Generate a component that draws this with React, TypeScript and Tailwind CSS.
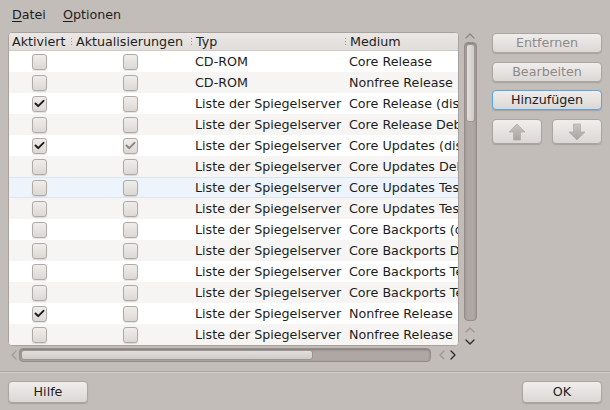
import React from "react";

const rows: { typ: string; medium: string; a: boolean; u: boolean }[] = [
  { typ: "CD-ROM", medium: "Core Release", a: false, u: false },
  { typ: "CD-ROM", medium: "Nonfree Release", a: false, u: false },
  { typ: "Liste der Spiegelserver", medium: "Core Release (distrib1)", a: true, u: false },
  { typ: "Liste der Spiegelserver", medium: "Core Release Debug (distrib2)", a: false, u: false },
  { typ: "Liste der Spiegelserver", medium: "Core Updates (distrib3)", a: true, u: true },
  { typ: "Liste der Spiegelserver", medium: "Core Updates Debug (distrib4)", a: false, u: false },
  { typ: "Liste der Spiegelserver", medium: "Core Updates Testing (distrib5)", a: false, u: false },
  { typ: "Liste der Spiegelserver", medium: "Core Updates Testing Debug", a: false, u: false },
  { typ: "Liste der Spiegelserver", medium: "Core Backports (distrib7)", a: false, u: false },
  { typ: "Liste der Spiegelserver", medium: "Core Backports Debug (distrib8)", a: false, u: false },
  { typ: "Liste der Spiegelserver", medium: "Core Backports Testing", a: false, u: false },
  { typ: "Liste der Spiegelserver", medium: "Core Backports Testing Debug", a: false, u: false },
  { typ: "Liste der Spiegelserver", medium: "Nonfree Release", a: true, u: false },
  { typ: "Liste der Spiegelserver", medium: "Nonfree Release", a: false, u: false },
];

function Check({ checked, grey }: { checked: boolean; grey?: boolean }) {
  return (
    <div className="w-[15px] h-[16px] rounded-[3px] border border-[#b0aaa7] bg-gradient-to-b from-[#efedeb] to-[#dcd8d5] shadow-[0_1px_1px_rgba(0,0,0,0.12)] flex items-center justify-center">
      {checked && (
        <svg width="11" height="9" viewBox="0 0 11 9">
          <path
            d="M1.5 4.5 L4.2 7.2 L9.5 1.8"
            fill="none"
            stroke={grey ? "#8a8583" : "#1a1a1a"}
            strokeWidth="1.9"
            strokeLinecap="round"
            strokeLinejoin="round"
          />
        </svg>
      )}
    </div>
  );
}

function Sep() {
  return (
    <div className="flex flex-col gap-[2px] mr-[4px]">
      <div className="w-[1px] h-[1px] bg-[#9a9491]" />
      <div className="w-[1px] h-[1px] bg-[#9a9491]" />
      <div className="w-[1px] h-[1px] bg-[#9a9491]" />
    </div>
  );
}

function Btn({ children, disabled, focus, w }: { children: React.ReactNode; disabled?: boolean; focus?: boolean; w?: string }) {
  return (
    <div
      className={
        "h-[20px] rounded-[4px] border flex items-center justify-center bg-gradient-to-b from-[#f0eeed] to-[#dbd7d5] shadow-[0_1px_1px_rgba(0,0,0,0.15)] " +
        (focus ? "border-[#58a7e3] text-[#1d1d1d] " : "border-[#aba5a2] ") +
        (disabled ? "text-[#8e8986] " : "text-[#1d1d1d] ")
      }
    >
      {children}
    </div>
  );
}

function Chevron({ dir, color = "#7d7774" }: { dir: "up" | "down" | "left" | "right"; color?: string }) {
  const d =
    dir === "up"
      ? "M1 6 L5 2 L9 6"
      : dir === "down"
      ? "M1 2 L5 6 L9 2"
      : dir === "left"
      ? "M6 1 L2 5 L6 9"
      : "M2 1 L6 5 L2 9";
  const vert = dir === "up" || dir === "down";
  return (
    <svg width={vert ? 10 : 8} height={vert ? 8 : 10} viewBox={vert ? "0 0 10 8" : "0 0 8 10"}>
      <path d={d} fill="none" stroke={color} strokeWidth="1.3" strokeLinecap="round" strokeLinejoin="round" />
    </svg>
  );
}

function Arrow({ up }: { up: boolean }) {
  return (
    <svg width="20" height="20" viewBox="0 0 20 20">
      <defs>
        <linearGradient id={up ? "gu" : "gd"} x1="0" y1="0" x2="0" y2="1">
          <stop offset="0" stopColor="#c9c5c3" />
          <stop offset="1" stopColor="#a9a4a1" />
        </linearGradient>
      </defs>
      <path
        d={up ? "M10 2 L18 10 L13.5 10 L13.5 18 L6.5 18 L6.5 10 L2 10 Z" : "M10 18 L18 10 L13.5 10 L13.5 2 L6.5 2 L6.5 10 L2 10 Z"}
        fill={`url(#${up ? "gu" : "gd"})`}
        stroke="#b3aeab"
        strokeWidth="0.8"
        strokeLinejoin="round"
      />
    </svg>
  );
}

export default function App() {
  return (
    <div
      className="w-[610px] h-[410px] bg-[#c3bdba] flex flex-col text-[12.7px] text-[#1d1d1d] overflow-hidden"
      style={{ fontFamily: '"DejaVu Sans", sans-serif' }}
    >
      {/* menu */}
      <div className="h-[32px] flex items-center pl-[12px] pb-[3px] gap-[17px]">
        <span>
          <span className="underline underline-offset-2">D</span>atei
        </span>
        <span>
          <span className="underline underline-offset-2">O</span>ptionen
        </span>
      </div>

      {/* content */}
      <div className="flex pl-[8px] pr-[8px]">
        <div className="w-[451px] flex flex-col">
          <div className="h-[314px] border border-[#a8a29f] rounded-[4px] bg-white overflow-hidden flex flex-col">
            <div className="h-[18px] shrink-0 flex items-center bg-gradient-to-b from-[#ebe8e6] to-[#e0dcda] border-b border-[#d0cbc8] whitespace-nowrap">
              <div className="w-[61px] pl-[3px]">Aktiviert</div>
              <div className="w-[120px] flex items-center pl-[1px]">
                <Sep />
                Aktualisierungen
              </div>
              <div className="w-[154px] flex items-center pl-[1px]">
                <Sep />
                Typ
              </div>
              <div className="flex-1 flex items-center pl-[1px]">
                <Sep />
                Medium
              </div>
            </div>
            {rows.map((r, i) => {
              const hover = i === 6;
              const bg = hover
                ? "bg-[#edf4fb] border-y border-[#dbe6f1]"
                : i % 2 === 0
                ? "bg-white"
                : "bg-[#f6f5f4]";
              return (
                <div key={i} className={"h-[21px] shrink-0 flex items-center whitespace-nowrap " + bg}>
                  <div className="w-[61px] flex justify-center">
                    <Check checked={r.a} />
                  </div>
                  <div className="w-[120px] flex justify-center pl-[1px]">
                    <Check checked={r.u} grey />
                  </div>
                  <div className="w-[154px] pl-[5px] overflow-hidden">{r.typ}</div>
                  <div className="flex-1 pl-[5px] overflow-hidden">{r.medium}</div>
                </div>
              );
            })}
          </div>
          {/* horizontal scrollbar */}
          <div className="h-[16px] flex items-center pt-[2px]">
            <div className="w-[11px] flex justify-center opacity-60">
              <Chevron dir="left" color="#8f8986" />
            </div>
            <div className="w-[412px] h-[14px] rounded-[4px] bg-[#aea7a4] border border-[#948d8a] shadow-[inset_0_1px_2px_rgba(0,0,0,0.25)] p-[1px] flex">
              <div className="w-[292px] h-full rounded-[3px] bg-gradient-to-b from-[#e2dfdd] to-[#cfcbc8] border border-[#9c9693]" />
            </div>
            <div className="flex items-center gap-[3px] pl-[7px]">
              <Chevron dir="left" color="#9d9794" />
              <Chevron dir="right" color="#2a2a2a" />
            </div>
          </div>
        </div>

        {/* vertical scrollbar */}
        <div className="w-[18px] h-[314px] flex flex-col items-center pl-[4px]">
          <div className="h-[10px] flex items-start justify-center">
            <Chevron dir="up" color="#8f8986" />
          </div>
          <div className="w-[13px] h-[280px] rounded-[4px] bg-[#aea7a4] border border-[#948d8a] shadow-[inset_0_1px_2px_rgba(0,0,0,0.25)] p-[1px] flex flex-col">
            <div className="h-[78px] w-full rounded-[3px] bg-gradient-to-r from-[#e2dfdd] to-[#cfcbc8] border border-[#9c9693]" />
          </div>
          <div className="flex flex-col items-center gap-[4px] pt-[5px]">
            <Chevron dir="up" color="#9d9794" />
            <Chevron dir="down" color="#2a2a2a" />
          </div>
        </div>

        {/* buttons */}
        <div className="ml-auto w-[110px] flex flex-col">
          <div className="h-[1px]" />
          <Btn disabled>Entfernen</Btn>
          <div className="h-[9px]" />
          <Btn disabled>Bearbeiten</Btn>
          <div className="h-[8px]" />
          <Btn focus>Hinzufügen</Btn>
          <div className="h-[9px]" />
          <div className="flex gap-[10px]">
            <div className="w-[50px] h-[25px] rounded-[4px] border border-[#aba5a2] bg-gradient-to-b from-[#f0eeed] to-[#dbd7d5] shadow-[0_1px_1px_rgba(0,0,0,0.15)] flex items-center justify-center">
              <Arrow up />
            </div>
            <div className="w-[50px] h-[25px] rounded-[4px] border border-[#aba5a2] bg-gradient-to-b from-[#f0eeed] to-[#dbd7d5] shadow-[0_1px_1px_rgba(0,0,0,0.15)] flex items-center justify-center">
              <Arrow up={false} />
            </div>
          </div>
        </div>
      </div>

      {/* separator */}
      <div className="mx-[0px] mt-[9px] h-[2px] border-t border-[#aea8a5] border-b border-b-[#d2cdca]" />

      {/* bottom buttons */}
      <div className="flex justify-between px-[8px] pt-[8px]">
        <div className="w-[80px] h-[22px] rounded-[4px] border border-[#aba5a2] bg-gradient-to-b from-[#f0eeed] to-[#dbd7d5] shadow-[0_1px_1px_rgba(0,0,0,0.15)] flex items-center justify-center">
          Hilfe
        </div>
        <div className="w-[80px] h-[22px] rounded-[4px] border border-[#aba5a2] bg-gradient-to-b from-[#f0eeed] to-[#dbd7d5] shadow-[0_1px_1px_rgba(0,0,0,0.15)] flex items-center justify-center">
          OK
        </div>
      </div>
    </div>
  );
}
